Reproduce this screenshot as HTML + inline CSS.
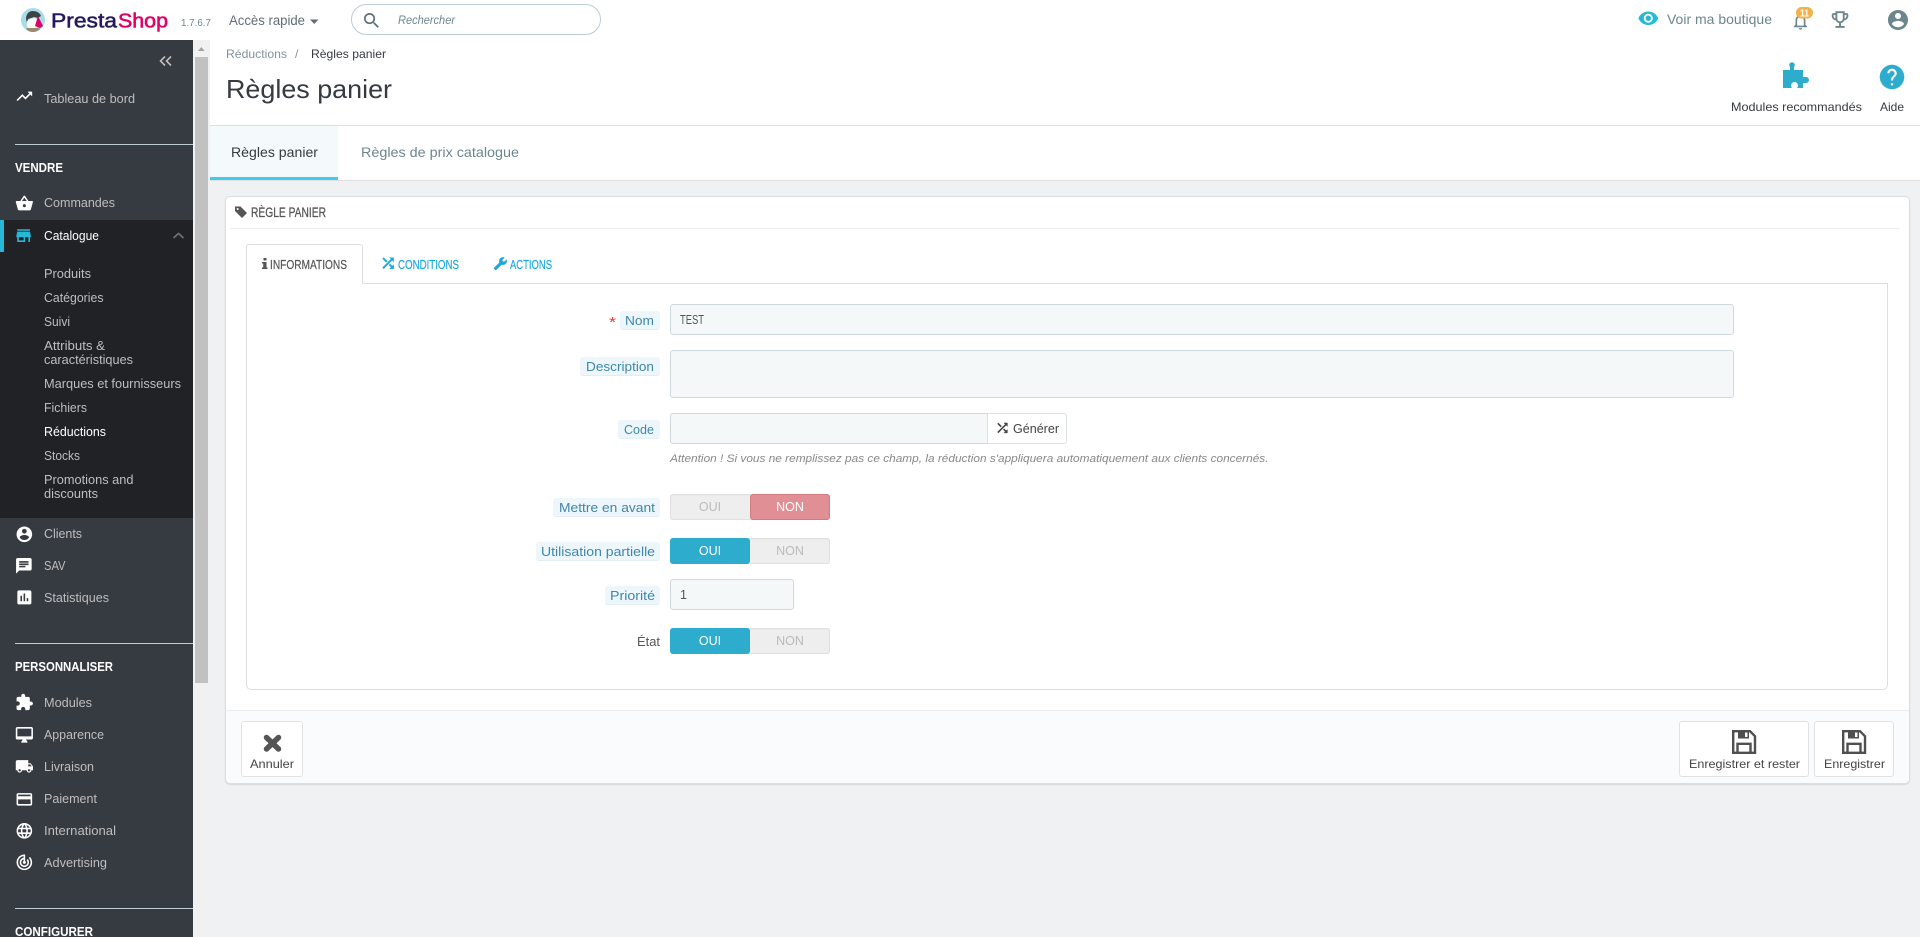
<!DOCTYPE html>
<html lang="fr"><head><meta charset="utf-8"><title>Règles panier • PrestaShop</title>
<style>
html,body{margin:0;padding:0;width:1920px;height:937px;overflow:hidden;background:#eff1f2;font-family:"Liberation Sans",sans-serif}
div{position:absolute;box-sizing:border-box}
svg#o{position:absolute;left:0;top:0;width:1920px;height:937px}
svg#o text{font-family:"Liberation Sans",sans-serif;font-size:12.5px}
.s text{fill:#bebebe}
.h text{fill:#fff!important;font-weight:700}
.lb{background:#edf6fb;border-bottom:1px solid #e2eef5;border-radius:3px;height:19px}
.in{background:#f5f8f9;border:1px solid #ccdade;border-radius:3px}
.sw{width:160px;height:26px;border-radius:3px;background:#eee;box-shadow:inset 0 0 0 1px #e0e0e0,inset 0 1px 2px #e2e2e2}
.on{left:0;top:0;width:80px;height:26px;background:#2eacce;border-radius:3px}
.off{left:80px;top:0;width:80px;height:26px;background:#e08f95;border:1px solid #d27b81;border-radius:3px}
.btn{background:#fff;border:1px solid #dfe2e5;border-radius:3px;top:721px;height:56px}
</style></head><body>
<!-- top bar -->
<div style="left:0;top:0;width:1920px;height:40px;background:#fff"></div>
<div style="left:351px;top:4px;width:250px;height:31px;border:1px solid #bbcdd2;border-radius:16px;background:#fff"></div>
<!-- sidebar -->
<div style="left:0;top:40px;width:193px;height:897px;background:#363a41"></div>
<div style="left:0;top:220px;width:193px;height:298px;background:#202226"></div>
<div style="left:0;top:220px;width:4px;height:32px;background:#25b9d7"></div>
<div style="left:15px;top:144px;width:178px;height:1px;background:#bbcdd2"></div>
<div style="left:15px;top:643px;width:178px;height:1px;background:#bbcdd2"></div>
<div style="left:15px;top:908px;width:178px;height:1px;background:#bbcdd2"></div>
<!-- scrollbar -->
<div style="left:193px;top:40px;width:17px;height:897px;background:#f1f1f1"></div>
<div style="left:195px;top:57px;width:13px;height:626px;background:#c1c1c1"></div>
<!-- header -->
<div style="left:210px;top:40px;width:1710px;height:86px;background:#fff;border-bottom:1px solid #dfdfdf"></div>
<div style="left:210px;top:126px;width:1710px;height:55px;background:#fff;border-bottom:1px solid #dfdfdf"></div>
<div style="left:210px;top:126px;width:128px;height:54px;background:#f4f9fb;border-bottom:3px solid #3ccdec"></div>
<!-- panel -->
<div style="left:225px;top:196px;width:1685px;height:588px;background:#fff;border:1px solid #dcdfe2;border-radius:5px;box-shadow:0 1px 1px #d5d8da"></div>
<div style="left:230px;top:228px;width:1670px;height:1px;background:#eeeeee"></div>
<div style="left:246px;top:283px;width:1642px;height:407px;border:1px solid #dcdfe2;border-radius:0 0 5px 5px;background:#fff"></div>
<div style="left:246px;top:244px;width:117px;height:40px;background:#fff;border:1px solid #dcdfe2;border-bottom:0;border-radius:3px 3px 0 0"></div>
<!-- footer -->
<div style="left:226px;top:710px;width:1683px;height:73px;background:#fafbfc;border-top:1px solid #e9ebed;border-radius:0 0 5px 5px"></div>
<div class="btn" style="left:241px;width:62px"></div>
<div class="btn" style="left:1679px;width:130px"></div>
<div class="btn" style="left:1814px;width:80px"></div>
<!-- form -->
<div class="in" style="left:670px;top:304px;width:1064px;height:31px"></div>
<div class="in" style="left:670px;top:350px;width:1064px;height:48px"></div>
<div class="in" style="left:670px;top:413px;width:318px;height:31px;border-radius:3px 0 0 3px"></div>
<div style="left:987px;top:413px;width:80px;height:31px;background:#fff;border:1px solid #dce1e4;border-radius:0 3px 3px 0"></div>
<div class="in" style="left:670px;top:579px;width:124px;height:31px"></div>
<div class="lb" style="left:620px;top:311px;width:40px"></div>
<div class="lb" style="left:580px;top:357px;width:80px"></div>
<div class="lb" style="left:618px;top:420px;width:42px"></div>
<div class="lb" style="left:553px;top:498px;width:107px"></div>
<div class="lb" style="left:536px;top:542px;width:124px"></div>
<div class="lb" style="left:605px;top:586px;width:55px"></div>
<div class="sw" style="left:670px;top:494px"><div class="off"></div></div>
<div class="sw" style="left:670px;top:538px"><div class="on"></div></div>
<div class="sw" style="left:670px;top:628px"><div class="on"></div></div>

<svg id="o" viewBox="0 0 1920 937" xmlns="http://www.w3.org/2000/svg">
<!-- logo -->
<circle cx="33" cy="20" r="12" fill="#a6dde9"/>
<path d="M26 18q1-7 7-7 6 0 8 5l-3 2-4-1-6 2-1 6z" fill="#3d4247"/>
<path d="M27 21q4-3 8-3l3 2-1 8h-9q-2-3-1-7z" fill="#f7f7f7"/>
<path d="M27 28h12l1 1q-3 3-7 3t-7-3z" fill="#9a8a6c"/>
<path d="M38 16l5 10-3 2-5-2z" fill="#df0067"/>
<text x="51" y="27.5" style="font-size:20.5px;stroke:#251b5b;stroke-width:.55" fill="#251b5b" textLength="66" lengthAdjust="spacingAndGlyphs">Presta</text>
<text x="118" y="27.5" style="font-size:20.5px;stroke:#df0067;stroke-width:.55" fill="#df0067" textLength="50" lengthAdjust="spacingAndGlyphs">Shop</text>
<text x="181" y="26" style="font-size:10.5px" fill="#6c868e" textLength="30" lengthAdjust="spacingAndGlyphs">1.7.6.7</text>
<text x="229" y="25" style="font-size:13.5px" fill="#5f6f75" textLength="76" lengthAdjust="spacingAndGlyphs">Accès rapide</text>
<path d="M310 19.500h8.500l-4.250 4.500z" fill="#5f6f75"/>
<path transform="translate(361.500 10.500) scale(.85)" fill="#5f6f75" d="M15.500 14h-.79l-.28-.27C15.410 12.590 16 11.110 16 9.500 16 5.910 13.090 3 9.500 3S3 5.910 3 9.500 5.910 16 9.500 16c1.610 0 3.090-.59 4.230-1.570l.27.28v.79l5 4.990L20.490 19l-4.990-5zm-6 0C7.010 14 5 11.990 5 9.500S7.010 5 9.500 5 14 7.010 14 9.500 11.990 14 9.500 14z"/>
<text x="398" y="24" style="font-size:12px;font-style:italic" fill="#6c868e" textLength="57" lengthAdjust="spacingAndGlyphs">Rechercher</text>
<!-- top right -->
<path transform="translate(1637.500 7.500) scale(.9)" fill="#25b9d7" d="M12 4.500C7 4.500 2.730 7.610 1 12c1.730 4.390 6 7.500 11 7.500s9.270-3.110 11-7.500c-1.730-4.390-6-7.500-11-7.500zM12 17c-2.760 0-5-2.240-5-5s2.240-5 5-5 5 2.240 5 5-2.240 5-5 5zm0-8c-1.660 0-3 1.340-3 3s1.340 3 3 3 3-1.340 3-3-1.340-3-3-3z"/>
<text x="1667" y="24" style="font-size:14px" fill="#6c868e" textLength="105" lengthAdjust="spacingAndGlyphs">Voir ma boutique</text>
<path transform="translate(1790.500 11.500) scale(.83)" fill="#6c868e" d="M12 22c1.100 0 2-.9 2-2h-4c0 1.100.9 2 2 2zm6-6v-5c0-3.070-1.630-5.640-4.500-6.320V4c0-.83-.67-1.500-1.500-1.500s-1.500.67-1.500 1.500v.68C7.640 5.360 6 7.920 6 11v5l-2 2v1h16v-1l-2-2zm-2 1H8v-6c0-2.480 1.510-4.500 4-4.500s4 2.020 4 4.500v6z"/>
<rect x="1796" y="7" width="17" height="11.500" rx="5.700" fill="#f1b24a"/>
<text x="1800" y="16.300" style="font-size:10px;font-weight:700" fill="#fff" textLength="9" lengthAdjust="spacingAndGlyphs">11</text>
<path transform="translate(1829 8.500) scale(.92)" fill="#6c868e" d="M19 5h-2V3H7v2H5c-1.100 0-2 .9-2 2v1c0 2.550 1.920 4.630 4.390 4.940.63 1.500 1.980 2.630 3.610 2.960V19H7v2h10v-2h-4v-3.100c1.630-.33 2.980-1.460 3.610-2.960C19.080 12.630 21 10.550 21 8V7c0-1.100-.9-2-2-2zM5 8V7h2v3.820C5.840 10.400 5 9.300 5 8zm7 6c-1.650 0-3-1.350-3-3V5h6v6c0 1.650-1.350 3-3 3zm7-6c0 1.300-.84 2.400-2 2.820V7h2v1z"/>
<path transform="translate(1886 8)" fill="#6c868e" d="M12 2C6.480 2 2 6.480 2 12s4.480 10 10 10 10-4.480 10-10S17.520 2 12 2zm0 3c1.660 0 3 1.340 3 3s-1.340 3-3 3-3-1.340-3-3 1.340-3 3-3zm0 14.200c-2.500 0-4.710-1.280-6-3.220.03-1.990 4-3.080 6-3.080 1.990 0 5.970 1.090 6 3.080-1.290 1.940-3.500 3.220-6 3.220z"/>
<!-- header actions -->
<path fill="#2eacce" d="M1783 70h7v-3a2.800 2.800 0 1 1 4 0v3h9v7h3a3 3 0 1 1 0 6h-3v5h-6q1-1 1-2.500a3.500 3.500 0 0 0-7 0q0 1.500 1 2.500h-9z"/>
<path transform="translate(1877.500 62.500) scale(1.21)" fill="#2eacce" stroke="#2eacce" stroke-width=".25" d="M12 2C6.480 2 2 6.480 2 12s4.480 10 10 10 10-4.480 10-10S17.520 2 12 2zm1 17h-2v-2h2v2zm2.070-7.750l-.9.92C13.450 12.900 13 13.500 13 15h-2v-.5c0-1.100.45-2.100 1.170-2.830l1.240-1.260c.37-.36.59-.86.59-1.410 0-1.100-.9-2-2-2s-2 .9-2 2H8c0-2.210 1.790-4 4-4s4 1.790 4 4c0 .88-.36 1.680-.93 2.250z"/>
<text x="1731" y="111" style="font-size:12px" fill="#363a41" textLength="131" lengthAdjust="spacingAndGlyphs">Modules recommandés</text>
<text x="1880" y="111" style="font-size:12px" fill="#363a41" textLength="24" lengthAdjust="spacingAndGlyphs">Aide</text>
<!-- scrollbar arrow -->
<path d="M198 51l3.300-4 3.300 4z" fill="#a3a3a3"/>
<!-- sidebar -->
<path d="M165 56.500l-4.500 4.500 4.500 4.500M171 56.500l-4.500 4.500 4.500 4.500" fill="none" stroke="#bebebe" stroke-width="1.600"/>
<g fill="#fff">
<path transform="translate(15 87) scale(.78)" d="M16 6l2.290 2.290-4.880 4.880-4-4L2 16.590 3.410 18l6-6 4 4 6.300-6.290L22 12V6z"/>
<path transform="translate(15 194) scale(.78)" d="M17.210 9l-4.380-6.560c-.19-.28-.51-.42-.83-.42-.32 0-.64.14-.83.43L6.790 9H2c-.55 0-1 .45-1 1 0 .09.01.18.04.27l2.540 9.270c.23.84 1 1.460 1.920 1.460h13c.92 0 1.690-.62 1.930-1.460l2.540-9.270L23 10c0-.55-.45-1-1-1h-4.790zM9 9l3-4.400L15 9H9zm3 8c-1.100 0-2-.9-2-2s.9-2 2-2 2 .9 2 2-.9 2-2 2z"/>
<path transform="translate(15 525) scale(.78)" d="M12 2C6.480 2 2 6.480 2 12s4.480 10 10 10 10-4.480 10-10S17.520 2 12 2zm0 3c1.660 0 3 1.340 3 3s-1.340 3-3 3-3-1.340-3-3 1.340-3 3-3zm0 14.200c-2.500 0-4.710-1.280-6-3.220.03-1.990 4-3.080 6-3.080 1.990 0 5.970 1.090 6 3.080-1.290 1.940-3.500 3.220-6 3.220z"/>
<path transform="translate(14.500 556.500) scale(.78)" d="M20 2H4c-1.100 0-1.990.9-1.990 2L2 22l4-4h14c1.100 0 2-.9 2-2V4c0-1.100-.9-2-2-2zM6 9h12v2H6V9zm8 5H6v-2h8v2zm4-6H6V6h12v2z"/>
<path transform="translate(15 588) scale(.78)" d="M19 3H5c-1.100 0-2 .9-2 2v14c0 1.100.9 2 2 2h14c1.100 0 2-.9 2-2V5c0-1.100-.9-2-2-2zM9 17H7v-7h2v7zm4 0h-2V7h2v10zm4 0h-2v-4h2v4z"/>
<path transform="translate(15 693) scale(.78)" d="M20.500 11H19V7c0-1.100-.9-2-2-2h-4V3.500C13 2.120 11.880 1 10.500 1S8 2.120 8 3.500V5H4c-1.100 0-1.990.9-1.990 2v3.800H3.500c1.490 0 2.700 1.210 2.700 2.700s-1.210 2.700-2.700 2.700H2V20c0 1.100.9 2 2 2h3.800v-1.500c0-1.490 1.210-2.700 2.700-2.700 1.490 0 2.700 1.210 2.700 2.700V22H17c1.100 0 2-.9 2-2v-4h1.500c1.380 0 2.500-1.120 2.500-2.500S21.880 11 20.500 11z"/>
<path transform="translate(15 725.500) scale(.78)" d="M21 2H3c-1.100 0-2 .9-2 2v12c0 1.100.9 2 2 2h7l-2 3v1h8v-1l-2-3h7c1.100 0 2-.9 2-2V4c0-1.100-.9-2-2-2zm0 12H3V4h18v10z"/>
<path transform="translate(15 757) scale(.78)" d="M20 8h-3V4H3c-1.100 0-2 .9-2 2v11h2c0 1.660 1.340 3 3 3s3-1.340 3-3h6c0 1.660 1.340 3 3 3s3-1.340 3-3h2v-5l-3-4zM6 18.500c-.83 0-1.500-.67-1.500-1.500s.67-1.500 1.500-1.500 1.500.67 1.500 1.500-.67 1.500-1.500 1.500zm13.500-9l1.960 2.500H17V9.500h2.500zm-1.500 9c-.83 0-1.500-.67-1.500-1.500s.67-1.500 1.500-1.500 1.500.67 1.500 1.500-.67 1.500-1.500 1.500z"/>
<path transform="translate(15 790) scale(.78)" d="M20 4H4c-1.110 0-1.990.89-1.990 2L2 18c0 1.110.89 2 2 2h16c1.110 0 2-.89 2-2V6c0-1.110-.89-2-2-2zm0 14H4v-6h16v6zm0-10H4V6h16v2z"/>
<path transform="translate(15 821.500) scale(.78)" d="M11.990 2C6.470 2 2 6.480 2 12s4.470 10 9.990 10C17.520 22 22 17.520 22 12S17.520 2 11.990 2zm6.930 6h-2.950c-.32-1.250-.78-2.450-1.380-3.560 1.840.63 3.370 1.910 4.330 3.560zM12 4.040c.83 1.200 1.480 2.530 1.910 3.960h-3.820c.43-1.430 1.080-2.760 1.910-3.960zM4.260 14C4.100 13.360 4 12.690 4 12s.1-1.360.26-2h3.380c-.08.66-.14 1.320-.14 2 0 .68.06 1.340.14 2H4.260zm.82 2h2.950c.32 1.250.78 2.450 1.380 3.560-1.840-.63-3.370-1.900-4.330-3.560zm2.950-8H5.080c.96-1.660 2.490-2.930 4.330-3.560C8.810 5.550 8.350 6.750 8.030 8zM12 19.960c-.83-1.200-1.480-2.530-1.910-3.960h3.820c-.43 1.430-1.080 2.760-1.910 3.960zM14.340 14H9.660c-.09-.66-.16-1.320-.16-2 0-.68.07-1.350.16-2h4.680c.09.65.16 1.320.16 2 0 .68-.07 1.340-.16 2zm.25 5.560c.6-1.110 1.060-2.310 1.380-3.560h2.950c-.96 1.650-2.490 2.930-4.330 3.560zM16.360 14c.08-.66.14-1.320.14-2 0-.68-.06-1.340-.14-2h3.380c.16.64.26 1.310.26 2s-.1 1.360-.26 2h-3.380z"/>
<path transform="translate(15 853) scale(.78)" d="M19.070 4.930l-1.410 1.410C19.100 7.790 20 9.790 20 12c0 4.420-3.580 8-8 8s-8-3.580-8-8c0-4.080 3.050-7.440 7-7.930v2.020C8.160 6.570 6 9.030 6 12c0 3.310 2.690 6 6 6s6-2.690 6-6c0-1.660-.67-3.160-1.760-4.240l-1.410 1.410C15.550 9.900 16 10.900 16 12c0 2.210-1.790 4-4 4s-4-1.790-4-4c0-1.860 1.280-3.410 3-3.860v2.140c-.6.35-1 .98-1 1.720 0 1.100.9 2 2 2s2-.9 2-2c0-.74-.4-1.380-1-1.720V2h-1C6.480 2 2 6.480 2 12s4.480 10 10 10 10-4.480 10-10c0-2.760-1.120-5.260-2.930-7.070z"/>
</g>
<path transform="translate(14 226) scale(.8)" fill="#25b9d7" d="M20 4H4v2h16V4zm1 10v-2l-1-5H4l-1 5v2h1v6h10v-6h4v6h2v-6h1zm-9 4H6v-4h6v4z"/>
<path d="M173.500 238l5-4.500 5 4.500" fill="none" stroke="#6c737b" stroke-width="1.600"/>
<g class="s">
<text x="44" y="103" textLength="91" lengthAdjust="spacingAndGlyphs">Tableau de bord</text>
<text x="44" y="207" textLength="71" lengthAdjust="spacingAndGlyphs">Commandes</text>
<text x="44" y="240" style="fill:#fff" textLength="55" lengthAdjust="spacingAndGlyphs">Catalogue</text>
<text x="44" y="278" textLength="47" lengthAdjust="spacingAndGlyphs">Produits</text>
<text x="44" y="302" textLength="59.500" lengthAdjust="spacingAndGlyphs">Catégories</text>
<text x="44" y="326" textLength="26" lengthAdjust="spacingAndGlyphs">Suivi</text>
<text x="44" y="350" textLength="61" lengthAdjust="spacingAndGlyphs">Attributs &amp;</text>
<text x="44" y="364" textLength="89" lengthAdjust="spacingAndGlyphs">caractéristiques</text>
<text x="44" y="388" textLength="137" lengthAdjust="spacingAndGlyphs">Marques et fournisseurs</text>
<text x="44" y="412" textLength="43" lengthAdjust="spacingAndGlyphs">Fichiers</text>
<text x="44" y="436" style="fill:#fff" textLength="62" lengthAdjust="spacingAndGlyphs">Réductions</text>
<text x="44" y="460" textLength="36" lengthAdjust="spacingAndGlyphs">Stocks</text>
<text x="44" y="484" textLength="89.500" lengthAdjust="spacingAndGlyphs">Promotions and</text>
<text x="44" y="498" textLength="54" lengthAdjust="spacingAndGlyphs">discounts</text>
<text x="44" y="538" textLength="38" lengthAdjust="spacingAndGlyphs">Clients</text>
<text x="44" y="570" textLength="21.500" lengthAdjust="spacingAndGlyphs">SAV</text>
<text x="44" y="602" textLength="65" lengthAdjust="spacingAndGlyphs">Statistiques</text>
<text x="44" y="707" textLength="48" lengthAdjust="spacingAndGlyphs">Modules</text>
<text x="44" y="739" textLength="60" lengthAdjust="spacingAndGlyphs">Apparence</text>
<text x="44" y="771" textLength="50" lengthAdjust="spacingAndGlyphs">Livraison</text>
<text x="44" y="803" textLength="53" lengthAdjust="spacingAndGlyphs">Paiement</text>
<text x="44" y="835" textLength="72" lengthAdjust="spacingAndGlyphs">International</text>
<text x="44" y="867" textLength="63" lengthAdjust="spacingAndGlyphs">Advertising</text>
</g>
<g class="h">
<text x="15" y="172" textLength="48" lengthAdjust="spacingAndGlyphs">VENDRE</text>
<text x="15" y="671" textLength="98" lengthAdjust="spacingAndGlyphs">PERSONNALISER</text>
<text x="15" y="936" textLength="78" lengthAdjust="spacingAndGlyphs">CONFIGURER</text>
</g>
<!-- heading -->
<text x="226" y="58" style="font-size:12px" fill="#7f939a" textLength="61" lengthAdjust="spacingAndGlyphs">Réductions</text>
<text x="295" y="58" style="font-size:12px" fill="#7f939a">/</text>
<text x="311" y="58" style="font-size:12px" fill="#363a41" textLength="75" lengthAdjust="spacingAndGlyphs">Règles panier</text>
<text x="226" y="98" style="font-size:26px" fill="#363a41" textLength="166" lengthAdjust="spacingAndGlyphs">Règles panier</text>
<text x="231" y="157" style="font-size:14px" fill="#363a41" textLength="87" lengthAdjust="spacingAndGlyphs">Règles panier</text>
<text x="361" y="157" style="font-size:14px" fill="#6c868e" textLength="158" lengthAdjust="spacingAndGlyphs">Règles de prix catalogue</text>
<!-- panel heading -->
<path fill="#555" fill-rule="evenodd" d="M235 206.500h5.500l6.500 6.500-5 5-7-7zM237.600 208a1 1 0 1 0 .1 0z"/>
<text x="251" y="217" style="font-size:13.5px;stroke:#555;stroke-width:.25" fill="#555" textLength="75" lengthAdjust="spacingAndGlyphs">RÈGLE PANIER</text>
<!-- inner tabs -->
<path fill="#555" d="M263.500 258h3v2.500h-3zM262 262h4.500v5.500h1v1.500h-5.500v-1.500h1.200v-4h-1.200z"/>
<text x="270" y="269" style="font-size:13px;stroke:#555;stroke-width:.2" fill="#555" textLength="77" lengthAdjust="spacingAndGlyphs">INFORMATIONS</text>
<path transform="translate(380 255) scale(.68)" fill="#1ba8e0" stroke="#1ba8e0" stroke-width=".8" d="M10.590 9.170L5.410 4 4 5.410l5.170 5.170 1.420-1.410zM14.500 4l2.040 2.040L4 18.590 5.410 20 17.960 7.460 20 9.500V4h-5.500zm.33 9.410l-1.410 1.410 3.130 3.130L14.500 20H20v-5.500l-2.040 2.040-3.130-3.130z"/>
<text x="398" y="269" style="font-size:13px;stroke:#1ba8e0;stroke-width:.2" fill="#1ba8e0" textLength="61" lengthAdjust="spacingAndGlyphs">CONDITIONS</text>
<path transform="translate(507.500 256.500) scale(-.6 .6)" fill="#1ba8e0" d="M22.700 19l-9.100-9.100c.9-2.300.4-5-1.500-6.900-2-2-5-2.400-7.400-1.300L9 6 6 9 1.600 4.700C.4 7.100.9 10.100 2.900 12.100c1.900 1.900 4.600 2.400 6.900 1.500l9.100 9.100c.4.4 1 .4 1.400 0l2.300-2.300c.5-.4.5-1.100.1-1.400z"/>
<text x="510" y="269" style="font-size:13px;stroke:#1ba8e0;stroke-width:.2" fill="#1ba8e0" textLength="42" lengthAdjust="spacingAndGlyphs">ACTIONS</text>
<!-- form text -->
<text x="609" y="327" style="font-size:15px" fill="#f03b3b" textLength="7" lengthAdjust="spacingAndGlyphs">*</text>
<g fill="#3f87a8">
<text x="625" y="325" textLength="29" lengthAdjust="spacingAndGlyphs">Nom</text>
<text x="586" y="371" textLength="68" lengthAdjust="spacingAndGlyphs">Description</text>
<text x="624" y="434" textLength="30" lengthAdjust="spacingAndGlyphs">Code</text>
<text x="559" y="512" textLength="96" lengthAdjust="spacingAndGlyphs">Mettre en avant</text>
<text x="541" y="556" textLength="114" lengthAdjust="spacingAndGlyphs">Utilisation partielle</text>
<text x="610" y="600" textLength="45" lengthAdjust="spacingAndGlyphs">Priorité</text>
</g>
<text x="637" y="646" fill="#555" textLength="23" lengthAdjust="spacingAndGlyphs">État</text>
<text x="680" y="324" style="font-size:12.5px" fill="#555" textLength="24" lengthAdjust="spacingAndGlyphs">TEST</text>
<text x="680" y="599" style="font-size:12.5px" fill="#555">1</text>
<path transform="translate(995 420.500) scale(.62)" fill="#444" stroke="#444" stroke-width=".8" d="M10.590 9.170L5.410 4 4 5.410l5.170 5.170 1.420-1.410zM14.500 4l2.040 2.040L4 18.590 5.410 20 17.960 7.460 20 9.500V4h-5.500zm.33 9.410l-1.410 1.410 3.130 3.130L14.500 20H20v-5.500l-2.040 2.040-3.130-3.130z"/>
<text x="1013" y="433" fill="#444" textLength="46" lengthAdjust="spacingAndGlyphs">Générer</text>
<text x="670" y="462" style="font-size:11px;font-style:italic" fill="#888" textLength="598.500" lengthAdjust="spacingAndGlyphs">Attention ! Si vous ne remplissez pas ce champ, la réduction s'appliquera automatiquement aux clients concernés.</text>
<g style="text-anchor:middle">
<text x="710" y="511" fill="#bbb">OUI</text><text x="790" y="511" fill="#fff">NON</text>
<text x="710" y="555" fill="#fff">OUI</text><text x="790" y="555" fill="#bbb">NON</text>
<text x="710" y="645" fill="#fff">OUI</text><text x="790" y="645" fill="#bbb">NON</text>
</g>
<!-- footer buttons -->
<path d="M266.500 737.500l12 11.500M278.500 737.500l-12 11.500" stroke="#555" stroke-width="5.500" stroke-linecap="round" fill="none"/>
<text x="250" y="768" style="font-size:12px" fill="#444" textLength="44" lengthAdjust="spacingAndGlyphs">Annuler</text>
<g fill="none" stroke="#4f4f4f" stroke-width="2.400">
<path d="M1733.200 731.200h16.800l5 5v16.600h-21.800z"/>
<path fill="#4f4f4f" stroke="none" d="M1738 731h11v7.500h-11z"/>
<path fill="#fff" stroke="none" d="M1745 732.500h2.500v4.500h-2.500z"/>
<path d="M1737.500 752.800v-9h13v9"/>
<path transform="translate(110 0)" d="M1733.200 731.200h16.800l5 5v16.600h-21.800z"/>
<path transform="translate(110 0)" fill="#4f4f4f" stroke="none" d="M1738 731h11v7.500h-11z"/>
<path transform="translate(110 0)" fill="#fff" stroke="none" d="M1745 732.500h2.500v4.500h-2.500z"/>
<path transform="translate(110 0)" d="M1737.500 752.800v-9h13v9"/>
</g>
<text x="1689" y="768" style="font-size:12px" fill="#444" textLength="111" lengthAdjust="spacingAndGlyphs">Enregistrer et rester</text>
<text x="1824" y="768" style="font-size:12px" fill="#444" textLength="61" lengthAdjust="spacingAndGlyphs">Enregistrer</text>
</svg>
</body></html>
